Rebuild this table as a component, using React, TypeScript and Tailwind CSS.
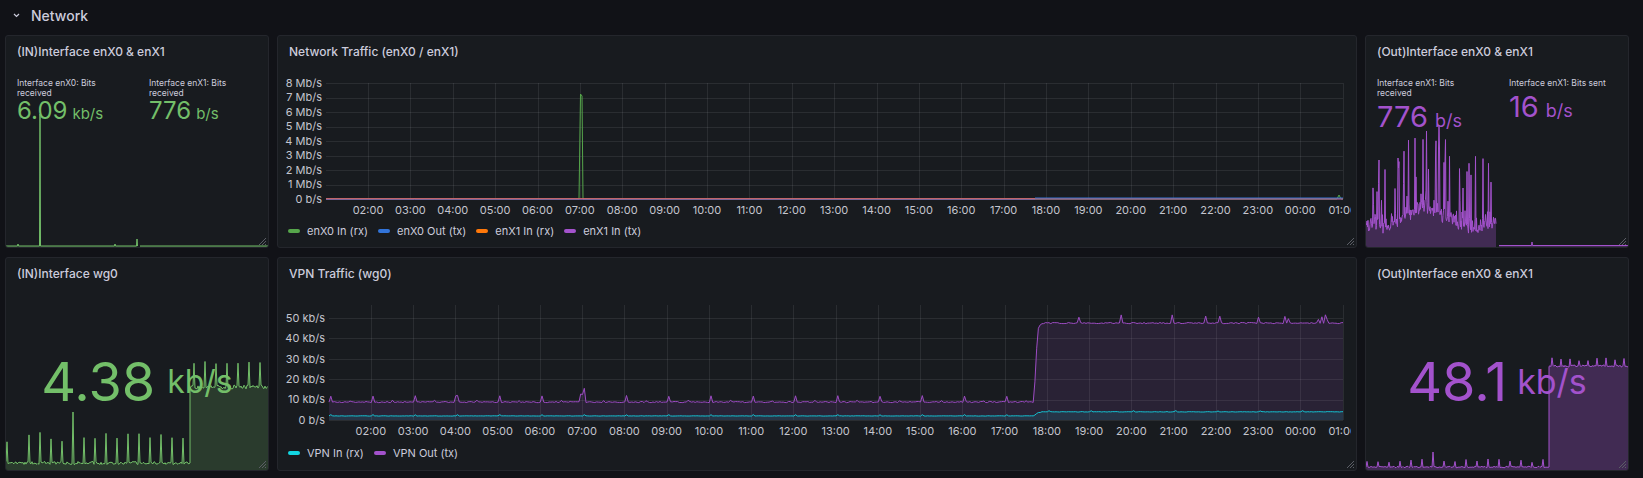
import React from "react";

type Pt = [number, number];

const GREEN = "#73bf69";
const PURPLE = "#a352cc";
const GRID = "rgba(204,204,220,0.1)";
const AXIS = "#c4c5ce";

function rng(seed: number) {
  let a = seed >>> 0;
  return () => {
    a = (a + 0x6d2b79f5) | 0;
    let t = Math.imul(a ^ (a >>> 15), 1 | a);
    t = (t + Math.imul(t ^ (t >>> 7), 61 | t)) ^ t;
    return ((t ^ (t >>> 14)) >>> 0) / 4294967296;
  };
}

const line = (pts: Pt[]) => pts.map(([x, y], i) => `${i ? "L" : "M"}${x.toFixed(1)} ${y.toFixed(1)}`).join("");
const area = (pts: Pt[], base: number) =>
  `${line(pts)}L${pts[pts.length - 1][0]} ${base}L${pts[0][0]} ${base}Z`;

// ---------- sparkline data ----------

function topLeftSeries(): Pt[][] {
  return [
    [[0, 134], [11.5, 134], [12, 132], [12.5, 134], [33.5, 134], [34, 2], [34.5, 134], [108.5, 134], [109, 132], [109.5, 134], [130.5, 134], [131, 127], [131.5, 134]],
    [[134, 134], [262, 134]],
  ];
}

function bottomLeftSeries(): Pt[] {
  const r = rng(7);
  const pts: Pt[] = [];
  for (let x = 0; x <= 262; x++) {
    if (x < 184) {
      let y = 113 + (r() - 0.5) * 3;
      if (x % 11 === 1 && x !== 12) y = x === 67 ? 62 : 82 + r() * 10;
      pts.push([x, y]);
    } else {
      if (x === 184) pts.push([184, 113]);
      let y = 37 + (r() - 0.5) * 4;
      if ((x - 188) % 11 === 0) y = 5 + r() * 9;
      pts.push([x, y]);
    }
  }
  return pts;
}

function bottomRightSeries(): Pt[] {
  const r = rng(11);
  const pts: Pt[] = [];
  for (let x = 0; x <= 262; x++) {
    if (x < 183) {
      let y = 118 + (r() - 0.5) * 1.5;
      if (x % 11 === 1) y = x === 67 ? 103 : 110 + r() * 4;
      pts.push([x, y]);
    } else {
      if (x === 183) pts.push([183, 118]);
      let y = 17 + (r() - 0.5) * 2;
      if ((x - 186) % 9 === 0) y = 8 + r() * 4;
      pts.push([x, y]);
    }
  }
  return pts;
}

function topRightSeries(): Pt[][] {
  const r = rng(5);
  const a: Pt[] = [];
  for (let x = 0; x <= 130; x += 0.5) {
    const bump = Math.max(0, 1 - Math.abs(x - 60) / 38) * 20;
    const base = 116 - bump;
    let y = base - (0.35 * r() + 0.65 * r() * r()) * 30;
    if (r() < 0.1) y = base - 25 - r() * 60;
    if (x >= 72.5 && x <= 73.5) y = x === 73 ? 7 : 30;
    a.push([x, Math.min(y, 118)]);
  }
  const b: Pt[] = [[133, 127.5], [165.5, 127.5], [166, 124], [166.5, 127.5], [262, 127.5]];
  return [a, b];
}

// ---------- time series helpers ----------

const HOURS = [
  "02:00", "03:00", "04:00", "05:00", "06:00", "07:00", "08:00", "09:00", "10:00", "11:00", "12:00", "13:00",
  "14:00", "15:00", "16:00", "17:00", "18:00", "19:00", "20:00", "21:00", "22:00", "23:00", "00:00", "01:00",
];

function vpnSeries(left: number, width: number, zero: number, k: number) {
  const r = rng(21);
  const out: Pt[] = [];
  const inn: Pt[] = [];
  for (let i = 0; i <= 576; i++) {
    const t = i * 2.5;
    const m = (((t - 61) % 60) + 60) % 60;
    let o: number;
    let c: number;
    if (t < 1001) {
      o = 8.8 + (r() - 0.5) * 0.6;
      c = 2 + (r() - 0.5) * 0.15;
      if (m < 2.5) {
        o += 3;
        c += 0.6;
      }
      if (Math.abs(m - 30) < 1.3) o += 0.7;
      if (t > 355 && t < 364) o += 4;
      if (t > 178 && t < 182) o += 2.8;
    } else if (t < 1006) {
      o = 8.8 + ((t - 1001) / 5) * 33;
      c = 2 + ((t - 1001) / 5) * 1.5;
    } else if (t < 1011) {
      o = 44 + ((t - 1006) / 5) * 3.3;
      c = 3.7;
    } else {
      o = 47.5 + (r() - 0.5) * 0.6;
      c = 4 + (r() - 0.5) * 0.2;
      if (r() < 0.07) o += 1.5 + r() * 2.5;
      if (m < 2.5) c += 0.5;
    }
    const x = left + (t / 1440) * width;
    out.push([x, zero - o * k]);
    inn.push([x, zero - c * k]);
  }
  return { out, inn };
}

// ---------- components ----------

function ResizeHandle() {
  return (
    <svg width="8" height="8" className="absolute bottom-[2px] right-[2px]">
      <path d="M8 1L1 8M8 4L4 8M8 7L7 8" stroke="#5b5e66" strokeWidth="1" />
    </svg>
  );
}

function Panel({ title, children }: { title: string; children?: React.ReactNode }) {
  return (
    <div className="relative flex flex-col overflow-hidden rounded-[3px] border border-[#24262c] bg-[#181b1f]">
      <div className="relative z-10 px-[11px] pt-[8px] text-[12px] font-medium leading-[16px] text-[#ccccdc]">{title}</div>
      {children}
      <ResizeHandle />
    </div>
  );
}

type StatItem = { label: string; value: string; unit: string };

function StatPair({ items, tone, size }: { items: StatItem[]; tone: "green" | "purple"; size: "sm" | "md" }) {
  const color = tone === "green" ? "text-[#73bf69]" : "text-[#a352cc]";
  return (
    <div className="relative z-10 mt-[18px] grid grid-cols-[132px_132px] px-[11px]">
      {items.map((it) => (
        <div key={it.label + it.value} className="flex flex-col">
          <div className="w-[104px] text-[8.5px] leading-[10px] text-[#ccccdc]">{it.label}</div>
          {size === "sm" ? (
            <div className={`mt-[1px] flex items-baseline leading-none ${color}`}>
              <span className="text-[24px]">{it.value}</span>
              <span className="ml-[5px] text-[15px]">{it.unit}</span>
            </div>
          ) : (
            <div className={`mt-[4px] flex items-baseline leading-none ${color}`}>
              <span className="text-[29px]">{it.value}</span>
              <span className="ml-[7px] text-[18px]">{it.unit}</span>
            </div>
          )}
        </div>
      ))}
    </div>
  );
}

function BigStat({ value, unit, tone }: { value: string; unit: string; tone: "green" | "purple" }) {
  const color = tone === "green" ? "text-[#73bf69]" : "text-[#a352cc]";
  return (
    <div className={`relative z-10 flex flex-1 items-center justify-center pt-[12px] leading-none ${color}`}>
      <span className="text-[54px]">{value}</span>
      <span className={tone === "green" ? "ml-[12px] text-[32px]" : "ml-[10px] text-[34px]"}>{unit}</span>
    </div>
  );
}

function Sparkline({ segs, w, h, color, fill }: { segs: Pt[][]; w: number; h: number; color: string; fill: number }) {
  return (
    <svg width={w} height={h} className="absolute bottom-0 left-0">
      {segs.map((s, i) => (
        <g key={i}>
          <path d={area(s, h)} fill={color} fillOpacity={fill} />
          <path d={line(s)} fill="none" stroke={color} strokeWidth="1" strokeLinejoin="round" />
        </g>
      ))}
    </svg>
  );
}

type Legend = { label: string; swatch: string };

function LegendRow({ items }: { items: Legend[] }) {
  return (
    <div className="mt-[2px] flex h-[18px] items-center gap-[10px] pl-[10px] text-[11px] text-[#ccccdc]">
      {items.map((it) => (
        <div key={it.label} className="flex items-center gap-[7px]">
          <span className={`h-[4px] w-[12px] rounded-[2px] ${it.swatch}`} />
          <span>{it.label}</span>
        </div>
      ))}
    </div>
  );
}

function Axes({
  left, right, top, zero, ticks,
}: { left: number; right: number; top: number; zero: number; ticks: { y: number; label: string }[] }) {
  const w = right - left;
  return (
    <g>
      {ticks.map((t) => (
        <g key={t.label}>
          <line x1={left} x2={right} y1={Math.round(t.y) + 0.5} y2={Math.round(t.y) + 0.5} stroke={GRID} />
          <text x={left - 4} y={t.y} dy="0.35em" textAnchor="end" fill={AXIS} fontSize="11">
            {t.label}
          </text>
        </g>
      ))}
      {HOURS.map((h, i) => {
        const x = left + ((59.5 + 60 * i) / 1440) * w;
        return (
          <g key={h}>
            <line x1={Math.round(x) + 0.5} x2={Math.round(x) + 0.5} y1={top} y2={zero} stroke={GRID} />
            <text x={x} y={zero + 11} dy="0.35em" textAnchor="middle" fill={AXIS} fontSize="11">
              {h}
            </text>
          </g>
        );
      })}
    </g>
  );
}

function NetworkChart() {
  const left = 48;
  const right = 1065;
  const zero = 139;
  const k = 14.5;
  const ticks = Array.from({ length: 9 }, (_, i) => ({ y: zero - i * k, label: i === 0 ? "0 b/s" : `${i} Mb/s` }));
  const green = `M${left} ${zero}L136 ${zero}L136.5 ${zero - 1}L137 ${zero}L301 ${zero}L302.5 34L304 36L305 ${zero}L1059 ${zero}L1061 135L1063 ${zero}L${right} ${zero}`;
  return (
    <svg width="1073" height="160" className="block">
      <Axes left={left} right={right} top={zero - 8 * k} zero={zero} ticks={ticks} />
      <path d={green} fill="none" stroke="#56a64b" strokeWidth="1" />
      <path d={`M${left} ${zero}L757 ${zero}`} fill="none" stroke="#3274d9" strokeWidth="1" />
      <path d={`M${left} ${zero - 0.3}L${right} ${zero - 0.3}`} fill="none" stroke="#ff780a" strokeWidth="1" />
      <path d={`M${left} ${zero}L${right} ${zero}`} fill="none" stroke={PURPLE} strokeWidth="1" strokeOpacity="0.85" />
      <path d={`M757 ${zero - 1}L${right} ${zero - 1}`} fill="none" stroke="#3274d9" strokeWidth="1" />
    </svg>
  );
}

function VpnChart() {
  const left = 51;
  const right = 1065;
  const zero = 138;
  const k = 2.04;
  const ticks = Array.from({ length: 6 }, (_, i) => ({ y: zero - i * 10 * k, label: i === 0 ? "0 b/s" : `${i * 10} kb/s` }));
  const { out, inn } = vpnSeries(left, right - left, zero, k);
  return (
    <svg width="1073" height="160" className="block">
      <Axes left={left} right={right} top={23} zero={zero} ticks={ticks} />
      <path d={area(out, zero)} fill={PURPLE} fillOpacity="0.13" />
      <path d={area(inn, zero)} fill="#12c9d6" fillOpacity="0.12" />
      <path d={line(inn)} fill="none" stroke="#15c3d3" strokeWidth="1" strokeLinejoin="round" />
      <path d={line(out)} fill="none" stroke="#9d4cc4" strokeWidth="1" strokeLinejoin="round" />
    </svg>
  );
}

export default function App() {
  return (
    <div className="h-[478px] w-[1643px] overflow-hidden bg-[#111217] font-[Inter,sans-serif]">
      <div className="flex h-[35px] items-center gap-[11px] pb-[4px] pl-[13px]">
        <svg width="7" height="5" viewBox="0 0 7 5">
          <path d="M1 1L3.5 3.5L6 1" fill="none" stroke="#ccccdc" strokeWidth="1.2" />
        </svg>
        <span className="text-[14px] font-medium text-[#ccccdc]">Network</span>
      </div>

      <div className="grid grid-cols-[264px_1080px_264px] grid-rows-[213px_214px] gap-x-[8px] gap-y-[9px] pl-[5px]">
        <Panel title="(IN)Interface enX0 & enX1">
          <Sparkline segs={topLeftSeries()} w={262} h={135} color={GREEN} fill={0.15} />
          <StatPair
            tone="green"
            size="sm"
            items={[
              { label: "Interface enX0: Bits received", value: "6.09", unit: "kb/s" },
              { label: "Interface enX1: Bits received", value: "776", unit: "b/s" },
            ]}
          />
        </Panel>

        <Panel title="Network Traffic (enX0 / enX1)">
          <NetworkChart />
          <LegendRow
            items={[
              { label: "enX0 In (rx)", swatch: "bg-[#56a64b]" },
              { label: "enX0 Out (tx)", swatch: "bg-[#3274d9]" },
              { label: "enX1 In (rx)", swatch: "bg-[#ff780a]" },
              { label: "enX1 In (tx)", swatch: "bg-[#a352cc]" },
            ]}
          />
        </Panel>

        <Panel title="(Out)Interface enX0 & enX1">
          <Sparkline segs={topRightSeries()} w={262} h={129} color={PURPLE} fill={0.3} />
          <StatPair
            tone="purple"
            size="md"
            items={[
              { label: "Interface enX1: Bits received", value: "776", unit: "b/s" },
              { label: "Interface enX1: Bits sent", value: "16", unit: "b/s" },
            ]}
          />
        </Panel>

        <Panel title="(IN)Interface wg0">
          <Sparkline segs={[bottomLeftSeries()]} w={262} h={120} color={GREEN} fill={0.2} />
          <BigStat value="4.38" unit="kb/s" tone="green" />
        </Panel>

        <Panel title="VPN Traffic (wg0)">
          <VpnChart />
          <LegendRow
            items={[
              { label: "VPN In (rx)", swatch: "bg-[#12d6e2]" },
              { label: "VPN Out (tx)", swatch: "bg-[#a352cc]" },
            ]}
          />
        </Panel>

        <Panel title="(Out)Interface enX0 & enX1">
          <Sparkline segs={[bottomRightSeries()]} w={262} h={121} color={PURPLE} fill={0.3} />
          <BigStat value="48.1" unit="kb/s" tone="purple" />
        </Panel>
      </div>
    </div>
  );
}
